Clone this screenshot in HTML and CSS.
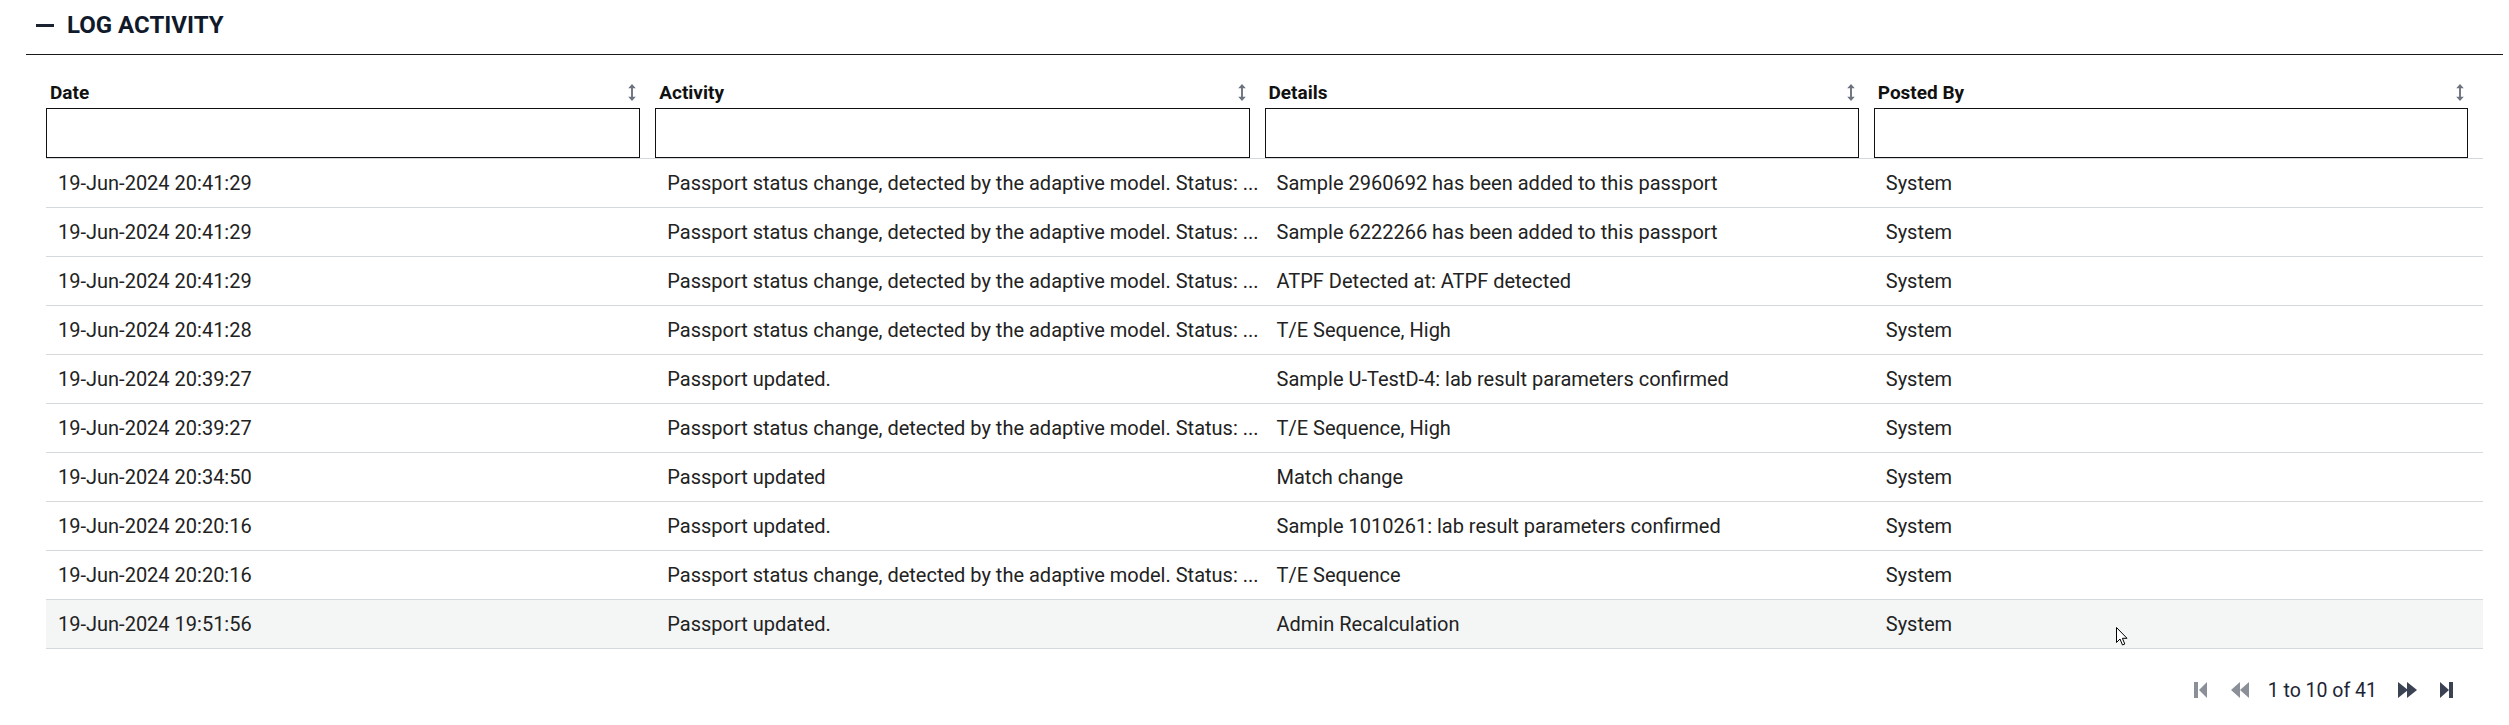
FILE: index.html
```html
<!DOCTYPE html>
<html lang="en">
<head>
    <meta charset="UTF-8">
    <meta name="viewport" content="width=device-width, initial-scale=1.0">
    <title>Log Activity</title>
    <link rel="stylesheet" href="styles.css">
</head>
<body>
    <div class="panel">
        <div class="panel-head">
            <span class="collapse-dash"></span>
            <h2 class="panel-title">LOG ACTIVITY</h2>
        </div>

        <div class="grid-wrap">
            <table class="log-grid">
                <thead>
                    <tr>
                        <th>
                            <div class="col-label"><span>Date</span><svg class="sort-icon" viewBox="0 0 8 18"><path d="M4 0 L8 4.5 H5 V13.5 H8 L4 18 L0 13.5 H3 V4.5 H0 Z"/></svg></div>
                            <input type="text" class="col-filter">
                        </th>
                        <th>
                            <div class="col-label"><span>Activity</span><svg class="sort-icon" viewBox="0 0 8 18"><path d="M4 0 L8 4.5 H5 V13.5 H8 L4 18 L0 13.5 H3 V4.5 H0 Z"/></svg></div>
                            <input type="text" class="col-filter">
                        </th>
                        <th>
                            <div class="col-label"><span>Details</span><svg class="sort-icon" viewBox="0 0 8 18"><path d="M4 0 L8 4.5 H5 V13.5 H8 L4 18 L0 13.5 H3 V4.5 H0 Z"/></svg></div>
                            <input type="text" class="col-filter">
                        </th>
                        <th>
                            <div class="col-label"><span>Posted By</span><svg class="sort-icon" viewBox="0 0 8 18"><path d="M4 0 L8 4.5 H5 V13.5 H8 L4 18 L0 13.5 H3 V4.5 H0 Z"/></svg></div>
                            <input type="text" class="col-filter">
                        </th>
                    </tr>
                </thead>
                <tbody>
                    <tr><td>19-Jun-2024 20:41:29</td><td>Passport status change, detected by the adaptive model. Status: ...</td><td>Sample 2960692 has been added to this passport</td><td>System</td></tr>
                    <tr><td>19-Jun-2024 20:41:29</td><td>Passport status change, detected by the adaptive model. Status: ...</td><td>Sample 6222266 has been added to this passport</td><td>System</td></tr>
                    <tr><td>19-Jun-2024 20:41:29</td><td>Passport status change, detected by the adaptive model. Status: ...</td><td>ATPF Detected at: ATPF detected</td><td>System</td></tr>
                    <tr><td>19-Jun-2024 20:41:28</td><td>Passport status change, detected by the adaptive model. Status: ...</td><td>T/E Sequence, High</td><td>System</td></tr>
                    <tr><td>19-Jun-2024 20:39:27</td><td>Passport updated.</td><td>Sample U-TestD-4: lab result parameters confirmed</td><td>System</td></tr>
                    <tr><td>19-Jun-2024 20:39:27</td><td>Passport status change, detected by the adaptive model. Status: ...</td><td>T/E Sequence, High</td><td>System</td></tr>
                    <tr><td>19-Jun-2024 20:34:50</td><td>Passport updated</td><td>Match change</td><td>System</td></tr>
                    <tr><td>19-Jun-2024 20:20:16</td><td>Passport updated.</td><td>Sample 1010261: lab result parameters confirmed</td><td>System</td></tr>
                    <tr><td>19-Jun-2024 20:20:16</td><td>Passport status change, detected by the adaptive model. Status: ...</td><td>T/E Sequence</td><td>System</td></tr>
                    <tr class="row-hover"><td>19-Jun-2024 19:51:56</td><td>Passport updated.</td><td>Admin Recalculation</td><td>System</td></tr>
                </tbody>
            </table>

            <div class="pager">
                <svg class="pg-btn pg-off pg-first" viewBox="0 0 13 16"><rect x="0" y="0" width="4" height="16"/><polygon points="13,0 13,16 5,8"/></svg>
                <svg class="pg-btn pg-off pg-prev" viewBox="0 0 18 16"><polygon points="9,0 9,16 0,8"/><polygon points="18,0 18,16 9,8"/></svg>
                <span class="pg-text">1 to 10 of 41</span>
                <svg class="pg-btn pg-next" viewBox="0 0 19 16"><polygon points="0,0 10,8 0,16"/><polygon points="9,0 19,8 9,16"/></svg>
                <svg class="pg-btn pg-last" viewBox="0 0 13 16"><polygon points="0,0 9,8 0,16"/><rect x="9" y="0" width="4" height="16"/></svg>
            </div>
        </div>
    </div>

    <svg class="mouse-cursor" viewBox="0 0 12 19"><path d="M0.5 0.5 V15.5 L4 12 L6.5 18 L8.8 17 L6.4 11.3 H11 Z" fill="#fff" stroke="#000" stroke-width="1"/></svg>
</body>
</html>
```

FILE: styles.css
```css
body {
    margin: 0;
    background-color: #fff;
    color: #212529;
    font-family: Roboto, "Noto Sans", Arial, sans-serif;
}

.panel {
    padding: 0 6px 0 26px;
}

.panel-head {
    display: flex;
    align-items: center;
    height: 50px;
    padding-bottom: 4px;
    border-bottom: 1px solid #1a1a1a;
}

.collapse-dash {
    width: 18px;
    height: 3px;
    margin-left: 10px;
    margin-right: 13px;
    background-color: #1b2230;
}

.panel-title {
    margin: 0;
    font-size: 24px;
    font-weight: 700;
    color: #111a2b;
}

.grid-wrap {
    padding: 0 20px;
}

.log-grid {
    width: 100%;
    table-layout: fixed;
    border-collapse: collapse;
}

.log-grid th {
    padding: 25px 15px 0 0;
    text-align: left;
    vertical-align: top;
    border-bottom: 1px solid #d6d9dc;
}

.col-label {
    display: flex;
    align-items: center;
    justify-content: space-between;
    height: 24px;
    padding: 0 4px;
    margin-bottom: 4px;
    font-size: 19px;
    font-weight: 700;
    color: #111;
}

.sort-icon {
    width: 8px;
    height: 17px;
    fill: #6c737e;
}

.col-filter {
    display: block;
    box-sizing: border-box;
    width: 100%;
    height: 50px;
    margin: 0;
    border: 1px solid #111;
    border-radius: 0;
    background: #fff;
}

.log-grid td {
    height: 48px;
    padding: 0 4px 0 12px;
    font-size: 20px;
    color: #222;
    white-space: nowrap;
    overflow: hidden;
    text-overflow: ellipsis;
    border-bottom: 1px solid #d6d9dc;
}

.log-grid tr.row-hover td {
    background-color: #f4f5f5;
}

.pager {
    display: flex;
    align-items: center;
    justify-content: flex-end;
    height: 40px;
    margin-top: 21px;
    padding-right: 30px;
}

.pg-btn {
    height: 16px;
    cursor: pointer;
}

.pg-off {
    fill: #8a8f98;
}

.pg-first {
    width: 13px;
    margin-right: 24px;
}

.pg-prev {
    width: 18px;
    margin-right: 19px;
}

.pg-text {
    font-size: 19.5px;
    color: #1c2434;
    margin-right: 21px;
}

.pg-next {
    width: 19px;
    margin-right: 23px;
    fill: #3a4253;
}

.pg-last {
    width: 13px;
    fill: #3a4253;
}

.mouse-cursor {
    position: absolute;
    left: 2116px;
    top: 627px;
    width: 12px;
    height: 19px;
}
```
